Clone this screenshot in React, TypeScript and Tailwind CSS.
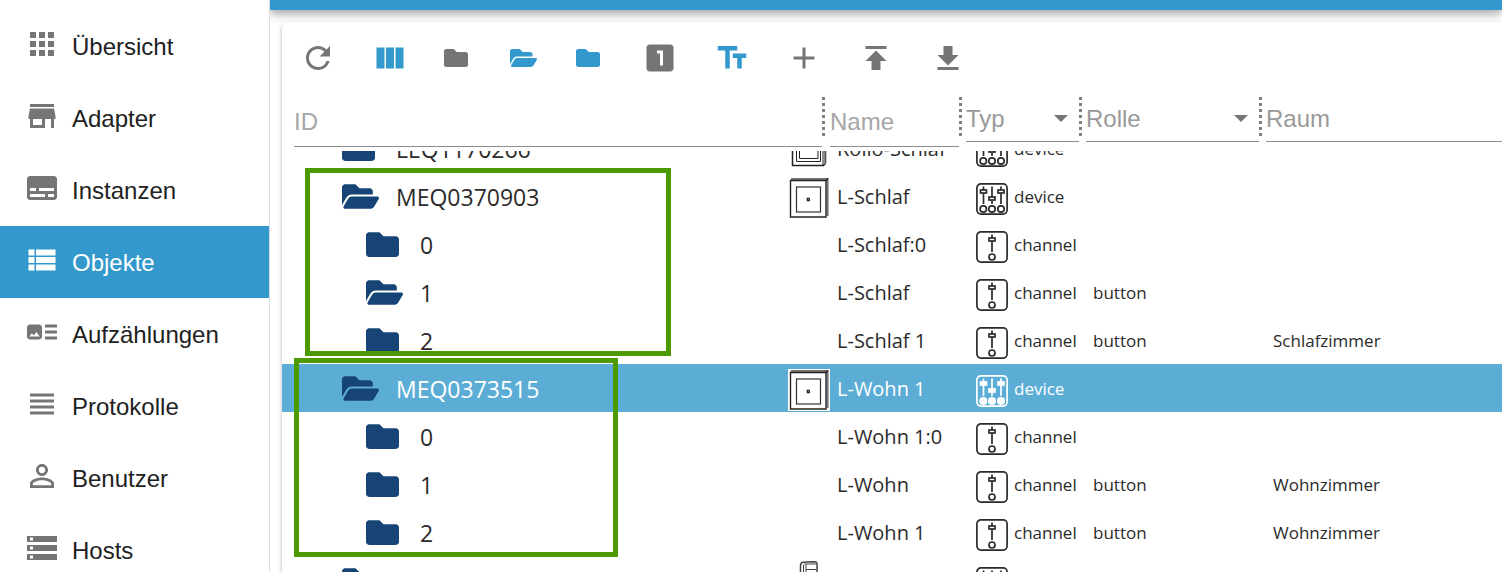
import React, { useState } from 'react';
import {
    MdAdd,
    MdApps,
    MdArtTrack,
    MdLooksOne,
    MdPersonOutline,
    MdPublish,
    MdRefresh,
    MdStorage,
    MdStore,
    MdSubtitles,
    MdTextFields,
    MdViewColumn,
    MdViewHeadline,
    MdViewList
} from 'react-icons/md';
import { FaFolder, FaFolderOpen } from 'react-icons/fa';

type ObjectType = 'device' | 'channel';
type Picture = 'blind' | 'switch' | 'door';

interface ObjectRow {
    key: string;
    id: string;
    level: number;
    open?: boolean;
    picture?: Picture;
    name: string;
    type: ObjectType;
    role?: string;
    room?: string;
}

const menu = [
    { name: 'Übersicht', icon: MdApps },
    { name: 'Adapter', icon: MdStore },
    { name: 'Instanzen', icon: MdSubtitles },
    { name: 'Objekte', icon: MdViewList },
    { name: 'Aufzählungen', icon: MdArtTrack },
    { name: 'Protokolle', icon: MdViewHeadline },
    { name: 'Benutzer', icon: MdPersonOutline },
    { name: 'Hosts', icon: MdStorage }
];

const rows: ObjectRow[] = [
    { key: 'leq', id: 'LEQ1170266', level: 0, picture: 'blind', name: 'Rollo-Schlaf', type: 'device' },
    { key: 'schlaf', id: 'MEQ0370903', level: 0, open: true, picture: 'switch', name: 'L-Schlaf', type: 'device' },
    { key: 'schlaf.0', id: '0', level: 1, name: 'L-Schlaf:0', type: 'channel' },
    { key: 'schlaf.1', id: '1', level: 1, open: true, name: 'L-Schlaf', type: 'channel', role: 'button' },
    { key: 'schlaf.2', id: '2', level: 1, name: 'L-Schlaf 1', type: 'channel', role: 'button', room: 'Schlafzimmer' },
    { key: 'wohn', id: 'MEQ0373515', level: 0, open: true, picture: 'switch', name: 'L-Wohn 1', type: 'device' },
    { key: 'wohn.0', id: '0', level: 1, name: 'L-Wohn 1:0', type: 'channel' },
    { key: 'wohn.1', id: '1', level: 1, name: 'L-Wohn', type: 'channel', role: 'button', room: 'Wohnzimmer' },
    { key: 'wohn.2', id: '2', level: 1, name: 'L-Wohn 1', type: 'channel', role: 'button', room: 'Wohnzimmer' },
    { key: 'next', id: '', level: 0, picture: 'door', name: '', type: 'device' }
];

const DeviceIcon = ({ filled }: { filled: boolean }) => {
    const fill = filled ? 'currentColor' : 'none';
    return (
        <svg viewBox="0 0 32 32" className="size-8 shrink-0" fill="none" stroke="currentColor" strokeWidth="1.7">
            <rect x="0.9" y="0.9" width="30.2" height="30.2" rx="4" />
            <path d="M7.5 3.5V7M7.5 10.5V21M16 3.5V14M16 17.5V21M25 3.5V7M25 10.5V21" />
            <rect x="4.5" y="7" width="6" height="3" fill={fill} />
            <rect x="13" y="14" width="6" height="3" fill={fill} />
            <rect x="22" y="7" width="6" height="3" fill={fill} />
            <circle cx="7.3" cy="26" r="3.2" fill={fill} />
            <circle cx="16" cy="26" r="3.2" fill={fill} />
            <circle cx="25" cy="26" r="3.2" fill={fill} />
        </svg>
    );
};

const ChannelIcon = () => (
    <svg viewBox="0 0 32 32" className="size-8 shrink-0" fill="none" stroke="currentColor" strokeWidth="1.7">
        <rect x="0.9" y="0.9" width="30.2" height="30.2" rx="4" />
        <path d="M16 3.5V7M16 10.5V21" />
        <rect x="13" y="7" width="6" height="3" />
        <circle cx="16" cy="26" r="3" />
    </svg>
);

const RowPicture = ({ picture }: { picture: Picture }) => {
    switch (picture) {
        case 'blind':
            return (
                <svg viewBox="0 0 42 42" className="size-[42px]" fill="none" stroke="#222">
                    <rect width="42" height="42" fill="#fff" stroke="none" />
                    <path d="M4.5 4V36.5H35.5L37.5 34V4" strokeWidth="1.5" />
                    <path d="M35 4V36" strokeWidth="1" />
                    <path d="M36.5 4V35" stroke="#888" strokeWidth="2" />
                    <path d="M8.5 4V32.5H32.5V4M11.5 4V29.5H30V4" />
                </svg>
            );
        case 'switch':
            return (
                <svg viewBox="0 0 42 42" className="size-[42px]" fill="none" stroke="#222">
                    <rect width="42" height="42" fill="#fff" stroke="none" />
                    <path d="M3 2H39.6V39" stroke="#777" strokeWidth="2" />
                    <path d="M2.5 3.5H38V40H2.5Z" strokeWidth="1.4" />
                    <path d="M38 3.5L40 1.5" strokeWidth="1.4" />
                    <rect x="8.5" y="10" width="24" height="25" stroke="#333" strokeWidth="1.2" />
                    <rect x="19.3" y="21.3" width="2" height="2.4" fill="#aaa" strokeWidth="1.2" />
                </svg>
            );
        default:
            return (
                <svg viewBox="0 0 42 42" className="size-[42px]" fill="none" stroke="#444">
                    <path d="M12.5 42V4.5Q12.5 1.5 15 1.2L26 0.7Q29 0.7 29 2.5V42" strokeWidth="1.5" />
                    <path d="M15.5 42V4Q16 3 18 3H28M18 3.5V42M18 8.5H28" />
                </svg>
            );
    }
};

const Separator = () => (
    <div
        aria-hidden="true"
        className="mt-[3px] h-[42px] w-[3px] shrink-0 bg-[repeating-linear-gradient(to_bottom,#808080_0_3px,transparent_3px_6px)]"
    />
);

const TextFilter = ({ label }: { label: string }) => (
    <input
        type="text"
        aria-label={label}
        placeholder={label}
        className="h-[53px] w-full border-b border-[#8c8c8c] pt-1 text-2xl text-[#212121] outline-none placeholder:text-[#a6a6a6]"
    />
);

const SelectFilter = ({ label, options }: { label: string; options: string[] }) => (
    <div className="relative">
        <select
            aria-label={label}
            className="h-12 w-full appearance-none border-b border-[#8c8c8c] bg-transparent pt-[2px] text-2xl text-[#999] outline-none"
        >
            <option value="">{label}</option>
            {options.map(option => (
                <option key={option}>{option}</option>
            ))}
        </select>
        <svg viewBox="0 0 14 7" className="pointer-events-none absolute top-[21px] right-[11px] h-[7px] w-[14px] fill-[#757575]">
            <path d="M0 0h14L7 7z" />
        </svg>
    </div>
);

const toolButton = 'flex h-[72px] w-[72px] items-center justify-center';
const folderButton = 'flex h-[72px] w-[66px] items-center pl-[18px]';

const Toolbar = () => (
    <div className="flex text-[#757575]">
        <button aria-label="Aktualisieren" className={toolButton}><MdRefresh className="size-9" /></button>
        <button aria-label="Spalten" className={toolButton}><MdViewColumn className="size-9 text-[#3399cc]" /></button>
        <button aria-label="Alle schließen" className={folderButton}><FaFolder className="size-6" /></button>
        <button aria-label="Alle öffnen" className={folderButton}><FaFolderOpen className="h-6 w-[27px] text-[#3399cc]" /></button>
        <button aria-label="Eine Ebene schließen" className={folderButton}><FaFolder className="size-6 text-[#3399cc]" /></button>
        <button aria-label="Zustände" className={toolButton}><MdLooksOne className="size-9" /></button>
        <button aria-label="Beschreibung" className={toolButton}><MdTextFields className="size-9 text-[#3399cc]" /></button>
        <button aria-label="Hinzufügen" className={toolButton}><MdAdd className="size-9" /></button>
        <button aria-label="Hochladen" className={toolButton}><MdPublish className="size-9" /></button>
        <button aria-label="Herunterladen" className={toolButton}><MdPublish className="size-9 rotate-180" /></button>
    </div>
);

const Sidebar = () => {
    const [active, setActive] = useState('Objekte');

    return (
        <nav className="w-[270px] shrink-0 overflow-hidden border-r border-[#dcdcdc] bg-white pt-[10px]">
            {menu.map(({ name, icon: Icon }) => (
                <a
                    key={name}
                    href="#"
                    onClick={() => setActive(name)}
                    className={`flex h-[72px] items-center gap-3 pl-6 text-2xl ${
                        active === name ? 'bg-[#3399cc] text-white' : 'text-[#212121]'
                    }`}
                >
                    <Icon className={`mb-1 size-9 ${active === name ? 'text-white' : 'text-[#757575]'}`} />
                    <span className="pt-[2px]">{name}</span>
                </a>
            ))}
        </nav>
    );
};

const App = () => {
    const [selected, setSelected] = useState('wohn');

    return (
        <div className="flex h-screen overflow-hidden bg-white font-['Liberation_Sans',Arial,sans-serif]">
            <Sidebar />
            <main className="flex min-w-0 flex-1 flex-col overflow-hidden">
                <header className="h-[10px] shrink-0 bg-[#3399cc] shadow-[0_3px_6px_-1px_rgba(0,0,0,0.2),0_6px_8px_0_rgba(0,0,0,0.14),0_2px_15px_0_rgba(0,0,0,0.12)]" />
                <section className="relative mt-3 ml-3 flex min-h-0 flex-1 flex-col rounded-tl-md bg-white shadow-[0_2px_4px_rgba(0,0,0,0.3)]">
                    <Toolbar />

                    {/* Column filters */}
                    <div className="flex shrink-0 items-start pl-3">
                        <div className="w-[528px] shrink-0"><TextFilter label="ID" /></div>
                        <Separator />
                        <div className="ml-[5px] w-[129px] shrink-0"><TextFilter label="Name" /></div>
                        <Separator />
                        <div className="ml-1 w-[113px] shrink-0"><SelectFilter label="Typ" options={['device', 'channel']} /></div>
                        <Separator />
                        <div className="ml-1 w-[173px] shrink-0"><SelectFilter label="Rolle" options={['button']} /></div>
                        <Separator />
                        <div className="ml-1 min-w-0 flex-1 overflow-hidden">
                            <div className="-mr-8"><SelectFilter label="Raum" options={['Schlafzimmer', 'Wohnzimmer']} /></div>
                        </div>
                    </div>

                    {/* Object tree, scrolled part of a row down */}
                    <div className="relative mt-1 min-h-0 flex-1 overflow-hidden font-['Open_Sans',sans-serif]">
                        <table className="-mt-[27px] w-full table-fixed text-[#2b2b2b]">
                            <colgroup>
                                <col className="w-[506px]" />
                                <col className="w-[42px]" />
                                <col className="w-[136px]" />
                                <col className="w-[120px]" />
                                <col className="w-[180px]" />
                                <col />
                            </colgroup>
                            <tbody>
                                {rows.map(row => {
                                    const isSelected = row.key === selected;
                                    return (
                                        <tr
                                            key={row.key}
                                            onClick={() => setSelected(row.key)}
                                            className={`h-12 whitespace-nowrap ${isSelected ? 'bg-[#5cadd6] text-white' : ''}`}
                                        >
                                            <td className="p-0">
                                                <div className={`flex h-12 items-center ${row.level === 0 ? 'pl-[60px]' : 'pl-[84px]'}`}>
                                                    <span className="w-[54px] text-[#164477]">
                                                        {row.open
                                                            ? <FaFolderOpen className="h-[33px] w-[37px]" />
                                                            : <FaFolder className="size-[33px]" />}
                                                    </span>
                                                    <span className="pt-[2px] text-[23px]">{row.id}</span>
                                                </div>
                                            </td>
                                            <td className="p-0">
                                                <div className="flex h-12 items-center pt-1">
                                                    {row.picture && <RowPicture picture={row.picture} />}
                                                </div>
                                            </td>
                                            <td className="p-0 pt-[2px] pl-[7px] text-xl">{row.name}</td>
                                            <td className="p-0 pl-[10px]">
                                                <div className="flex h-12 items-center gap-[6px]">
                                                    <span className="pt-[6px]">
                                                        {row.type === 'device' ? <DeviceIcon filled={isSelected} /> : <ChannelIcon />}
                                                    </span>
                                                    <span className="pt-[2px] text-[17px]">{row.type}</span>
                                                </div>
                                            </td>
                                            <td className="p-0 pt-[2px] pl-[7px] text-[17px]">{row.role}</td>
                                            <td className="p-0 pt-[2px] pl-[7px] text-[17px]">{row.room}</td>
                                        </tr>
                                    );
                                })}
                            </tbody>
                        </table>

                        {/* Marked device groups */}
                        <div className="pointer-events-none absolute top-[17px] left-[23px] h-[188px] w-[366px] border-[5px] border-[#4c9a00]" />
                        <div className="pointer-events-none absolute top-[207px] left-3 h-[199px] w-[324px] border-[5px] border-[#4c9a00]" />
                    </div>
                </section>
            </main>
        </div>
    );
};

export default App;
